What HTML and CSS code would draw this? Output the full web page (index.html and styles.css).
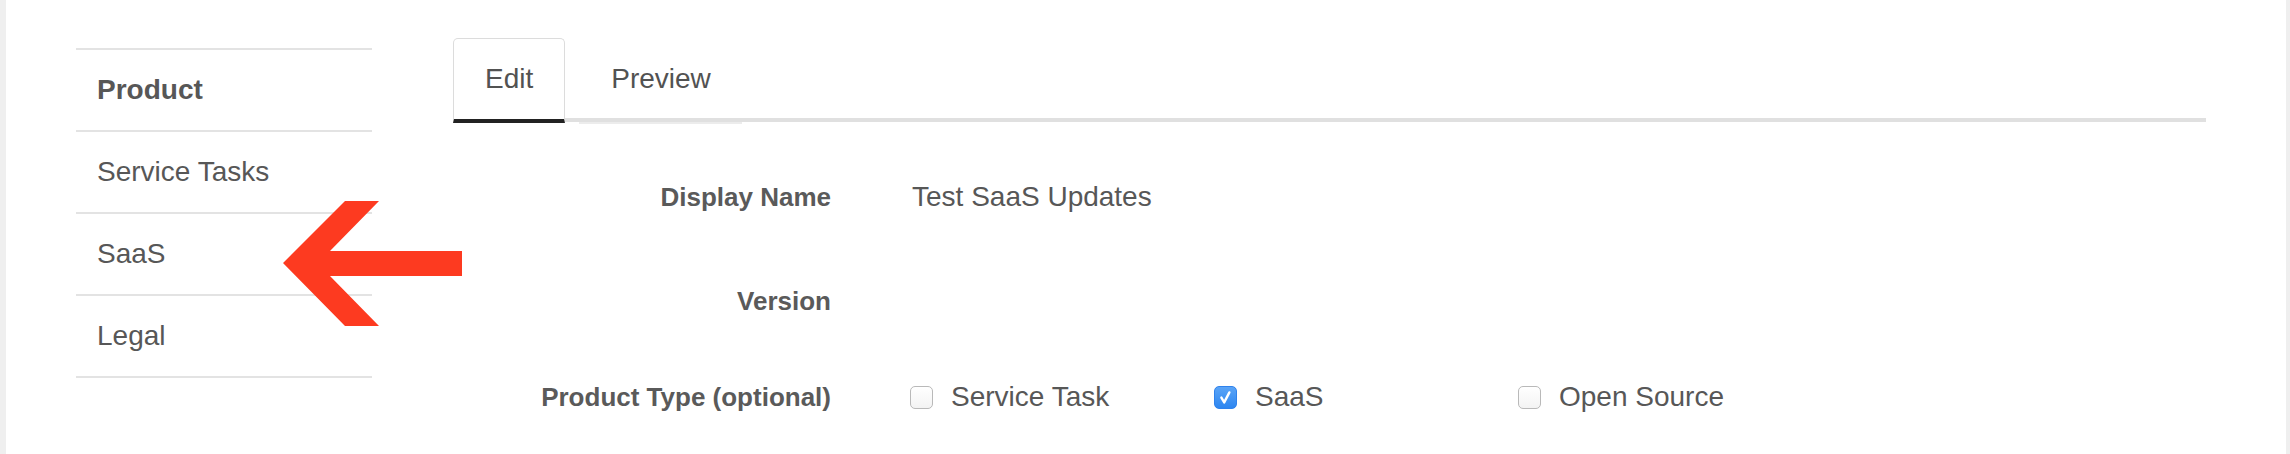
FILE: index.html
```html
<!DOCTYPE html>
<html lang="en">
<head>
<meta charset="utf-8">
<title>Product</title>
<link rel="stylesheet" href="styles.css">
</head>
<body>
<div class="page">
  <aside class="sidebar">
    <div class="side-item active">Product</div>
    <div class="side-item">Service Tasks</div>
    <div class="side-item">SaaS</div>
    <div class="side-item">Legal</div>
  </aside>
  <main class="main">
    <nav class="tabs">
      <div class="tab tab-active">Edit</div>
      <div class="tab tab-plain">Preview</div>
    </nav>
    <div class="form">
      <div class="row">
        <div class="label">Display Name</div>
        <div class="value"><span class="value-text">Test SaaS Updates</span></div>
      </div>
      <div class="row row-low">
        <div class="label">Version</div>
        <div class="value"></div>
      </div>
      <div class="row">
        <div class="label">Product Type (optional)</div>
        <div class="value options">
          <label class="option"><span class="box"></span><span class="opt-text">Service Task</span></label>
          <label class="option"><span class="box checked"><svg viewBox="0 0 23 23" width="23" height="23"><path d="M7.4 11.6 L10.2 16.4 L15.4 6.4" fill="none" stroke="#fff" stroke-width="2.4" stroke-linecap="round" stroke-linejoin="round"/></svg></span><span class="opt-text">SaaS</span></label>
          <label class="option"><span class="box"></span><span class="opt-text">Open Source</span></label>
        </div>
      </div>
    </div>
  </main>
</div>
<svg class="arrow" viewBox="0 0 180 126" width="180" height="126">
  <polygon points="0,62 62,0 96,0 47,50 179,50 179,75 47,75 96,125 62,125" fill="#fd3a20"/>
</svg>
</body>
</html>
```

FILE: styles.css
```css
html, body {
  margin: 0;
  padding: 0;
  height: 454px;
  overflow: hidden;
}

body {
  background: #efefef;
  font-family: "Liberation Sans", Arial, Helvetica, sans-serif;
  color: #575757;
  position: relative;
}

.page {
  margin: 0 4px 0 6px;
  height: 454px;
  background: #ffffff;
  display: flex;
  align-items: flex-start;
}

/* Sidebar */
.sidebar {
  margin-left: 70px;
  margin-top: 48px;
  width: 296px;
  flex: none;
  border-bottom: 2px solid #e3e3e3;
}

.side-item {
  height: 80px;
  border-top: 2px solid #e3e3e3;
  display: flex;
  align-items: center;
  padding-left: 21px;
  font-size: 28px;
  color: #575757;
}

.side-item.active {
  font-weight: bold;
}

/* Main */
.main {
  margin-left: 81px;
  margin-top: 38px;
  width: 1753px;
  flex: none;
}

.tabs {
  display: flex;
  align-items: flex-start;
  height: 80px;
  border-bottom: 4px solid #e0e0e0;
}

.tab {
  font-size: 28px;
  color: #525252;
  height: 80px;
  display: flex;
  align-items: center;
  flex: none;
}

.tab-active {
  border: 1px solid #dcdcdc;
  border-bottom: 4px solid #222;
  border-radius: 5px 5px 0 0;
  padding: 0 31px;
  margin-bottom: -5px;
  background: #fff;
}

.tab-plain {
  margin-left: 14px;
  border-top: 1px solid transparent;
  padding: 0 31px 3px 32px;
  border-bottom: 2px solid #ececec;
  margin-bottom: -6px;
}

/* Form */
.form {
  margin-top: 25px;
}

.row {
  display: flex;
  align-items: center;
  height: 100px;
}

.row-low {
  padding-top: 8px;
  height: 92px;
}

.label {
  width: 378px;
  flex: none;
  text-align: right;
  font-size: 26px;
  font-weight: bold;
  color: #5a5a5a;
}

.value {
  margin-left: 79px;
  font-size: 28px;
  color: #575757;
}

.value-text {
  padding-left: 2px;
}

.options {
  display: grid;
  grid-template-columns: repeat(3, 304px);
}

.option {
  display: flex;
  align-items: center;
  gap: 18px;
}

.box {
  width: 23px;
  height: 23px;
  box-sizing: border-box;
  border: 1px solid #b9b9b9;
  border-radius: 5px;
  background: linear-gradient(#ffffff, #f3f3f3);
  flex: none;
  display: block;
}

.box.checked {
  border: 1px solid #2f82ec;
  background: linear-gradient(#5aa4f7, #2d86f0);
}

.box.checked svg {
  display: block;
  margin: -1px;
}

.opt-text {
  font-size: 28px;
  color: #575757;
}

/* Annotation arrow overlay */
.arrow {
  position: absolute;
  left: 283px;
  top: 201px;
  display: block;
}
```
